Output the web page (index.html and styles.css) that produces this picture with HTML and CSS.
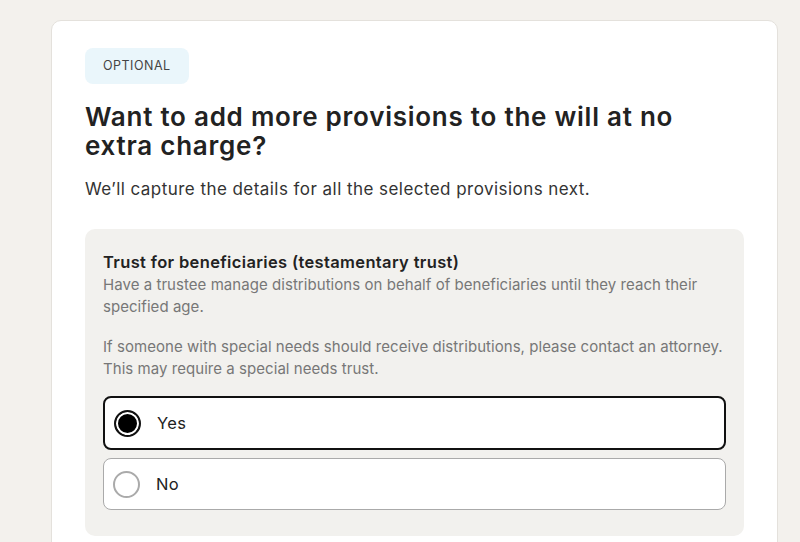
FILE: index.html
```html
<!DOCTYPE html>
<html>
<head>
<meta charset="utf-8">
<link rel="stylesheet" href="styles.css">
</head>
<body>
<div class="page">
  <div class="card">
    <span class="badge">OPTIONAL</span>
    <h1 class="title">Want to add more provisions to the will at no extra charge?</h1>
    <p class="subtitle">We’ll capture the details for all the selected provisions next.</p>
    <div class="panel">
      <h2 class="panel-title">Trust for beneficiaries (testamentary trust)</h2>
      <p class="panel-text">Have a trustee manage distributions on behalf of beneficiaries until they reach their specified age.</p>
      <p class="panel-text gap">If someone with special needs should receive distributions, please contact an attorney. This may require a special needs trust.</p>
      <div class="options">
        <label class="option selected">
          <span class="radio on"></span>
          <span class="opt-label">Yes</span>
        </label>
        <label class="option">
          <span class="radio"></span>
          <span class="opt-label">No</span>
        </label>
      </div>
    </div>
  </div>
</div>
</body>
</html>
```
FILE: styles.css
```css
html, body {
  margin: 0;
  padding: 0;
  height: 100%;
  overflow: hidden;
}
body {
  background: #f3f1ed;
  font-family: Inter, "Open Sans", sans-serif;
  color: #222;
}
.page {
  padding: 20px 22px 0 51px;
}
.card {
  background: #fff;
  border: 1px solid #e4e1dc;
  border-radius: 10px;
  padding: 27px 33px 40px 33px;
  min-height: 600px;
}
.badge {
  display: inline-block;
  background: #eaf6fb;
  color: #444;
  font-size: 12.5px;
  letter-spacing: 0.5px;
  padding: 0 18px;
  height: 36px;
  line-height: 36px;
  border-radius: 8px;
}
.title {
  margin: 18px 0 0 0;
  font-size: 26px;
  line-height: 29px;
  letter-spacing: 0.75px;
  font-weight: 600;
  color: #222;
  max-width: 620px;
}
.subtitle {
  margin: 18px 0 0 0;
  font-size: 17px;
  line-height: 22px;
  letter-spacing: 0.45px;
  color: #333;
}
.panel {
  margin-top: 29px;
  background: #f2f1ee;
  border-radius: 10px;
  padding: 22px 14px 26px 18px;
}
.panel-title {
  margin: 0;
  font-size: 16.5px;
  line-height: 22px;
  letter-spacing: 0.35px;
  font-weight: 600;
  color: #222;
}
.panel-text {
  margin: 1px 0 0 0;
  font-size: 15px;
  line-height: 22px;
  letter-spacing: 0.05px;
  color: #777;
}
.panel-text.gap {
  margin-top: 18px;
}
.options {
  margin-top: 16px;
  margin-right: 4px;
  display: flex;
  flex-direction: column;
  gap: 8px;
}
.option {
  display: flex;
  align-items: center;
  gap: 16px;
  height: 52px;
  padding: 0 9px;
  background: #fff;
  border: 1px solid #aaa;
  border-radius: 8px;
  box-sizing: border-box;
}
.option.selected {
  height: 54px;
  border: 2px solid #111;
}
.radio {
  width: 27px;
  height: 27px;
  border-radius: 50%;
  border: 2px solid #aaa;
  box-sizing: border-box;
  flex: none;
}
.radio.on {
  border: 2.5px solid #111;
  background: #000;
  box-shadow: inset 0 0 0 2px #fff;
}
.opt-label {
  font-size: 16.5px;
  letter-spacing: 0.3px;
  color: #222;
}
```
